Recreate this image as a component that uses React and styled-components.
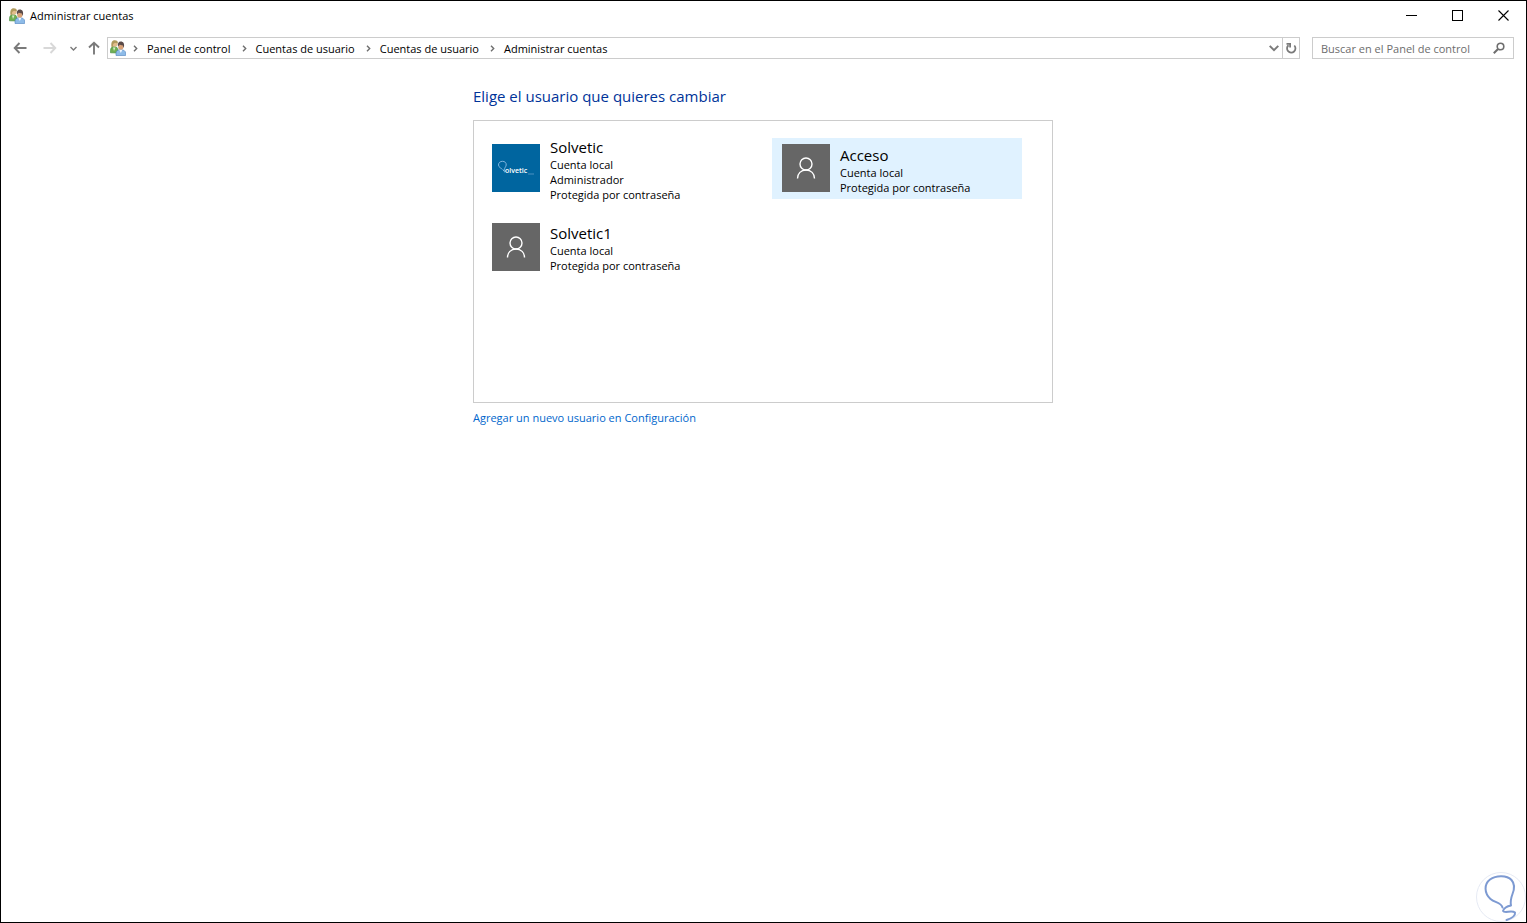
import React, { useState } from "react"
import styled, { createGlobalStyle, css } from "styled-components"

const GlobalStyle = createGlobalStyle`
  * {
    box-sizing: border-box;
  }

  body {
    background: #fff;
    color: #000;
    font: 11px/15px "Open Sans", "Noto Sans", sans-serif;
    margin: 0;
  }

  button,
  input {
    background: none;
    border: 0;
    color: inherit;
    font: inherit;
    padding: 0;
  }
`

const Window = styled.div`
  border: 1px solid #000;
  display: flex;
  flex-direction: column;
  min-height: 100vh;
  overflow: hidden;
  position: relative;
`

const TitleBar = styled.header`
  align-items: center;
  display: flex;
  height: 29px;
  padding-left: 8px;
`

const Title = styled.h1`
  flex: 1;
  font-size: 11px;
  font-weight: 400;
  margin: 0 0 0 5px;
`

const WindowButton = styled.button`
  align-items: center;
  display: flex;
  height: 29px;
  justify-content: center;
  width: 46px;

  &:hover {
    background: #e5e5e5;
  }
`

const NavBar = styled.nav`
  align-items: center;
  display: flex;
  height: 36px;
  padding: 0 12px 0 8px;
`

const NavButtons = styled.div`
  display: flex;
  gap: 8px;
  margin-right: 4px;
`

const NavButton = styled.button`
  align-items: center;
  color: ${({ $muted }) => ($muted ? "#d8d8d8" : "#7a7a7a")};
  display: flex;
  height: 22px;
  justify-content: center;
  width: ${({ $width = 22 }) => $width}px;
`

const AddressBar = styled.div`
  align-items: center;
  border: 1px solid #ccc;
  display: flex;
  flex: 1;
  height: 22px;
  margin-right: 12px;
  padding-left: 2px;
`

const Crumbs = styled.ol`
  display: flex;
  flex: 1;
  list-style: none;
  margin: 0;
  padding: 0;
`

const Crumb = styled.li`
  align-items: center;
  color: #6e6e6e;
  display: flex;

  a {
    color: #000;
    padding: 0 4px 0 2px;
    text-decoration: none;
  }

  svg {
    margin: 0 6px;
  }
`

const AddressButton = styled.button`
  align-items: center;
  border-left: ${({ $divided }) => ($divided ? "1px solid #ccc" : "0")};
  color: #7a7a7a;
  display: flex;
  height: 20px;
  justify-content: center;
  width: 17px;
`

const SearchBox = styled.form`
  align-items: center;
  border: 1px solid #ccc;
  color: #6e6e6e;
  display: flex;
  height: 22px;
  padding: 0 8px;
  width: 202px;

  input {
    flex: 1;
    min-width: 0;
    outline: 0;
  }

  input::placeholder {
    color: #6d6d6d;
    opacity: 1;
  }

  button {
    display: flex;
  }
`

const Content = styled.main`
  margin: 0 auto;
  max-width: 581px;
  padding: 20px 1px 0 0;
  width: 100%;
`

const Heading = styled.h2`
  color: #039;
  font-size: 15px;
  font-weight: 400;
  line-height: 20px;
  margin: 0 0 14px;
`

const Accounts = styled.ul`
  align-content: start;
  align-items: center;
  border: 1px solid #ccc;
  display: grid;
  gap: 10px 40px;
  grid-template-columns: repeat(2, 250px);
  list-style: none;
  margin: 0 0 7px;
  min-height: 283px;
  padding: 9px 8px;
`

const AccountLink = styled.a`
  align-items: center;
  color: #000;
  display: flex;
  gap: 10px;
  padding: 4px 10px;
  text-decoration: none;

  ${({ $active }) =>
    $active &&
    css`
      background: #e0f2ff;
    `}
`

const Avatar = styled.span`
  background: ${({ $brand }) => ($brand ? "#00659f" : "#666")};
  display: flex;
  flex: none;
  height: 48px;
  width: 48px;
`

const AccountText = styled.span`
  display: flex;
  flex-direction: column;
  padding-top: 3px;

  strong {
    font-size: 15px;
    font-weight: 400;
    line-height: 20px;
  }
`

const SettingsLink = styled.a`
  color: #06c;
  text-decoration: none;

  &:hover {
    text-decoration: underline;
  }
`

const Bulb = styled.svg`
  bottom: 0;
  position: absolute;
  right: 0;
`

const UsersIcon = () => (
  <svg width="16" height="16" viewBox="0 0 16 16" aria-hidden="true">
    <path d="M.5 12.800V10.500C.5 8 2 6.500 4 6.500s4 1 4 3.500v3z" fill="#6fae52" stroke="#3f8a3c" strokeWidth=".6" />
    <path d="M3 7.500l1 3.500 1.500-3.500z" fill="#d9efc9" />
    <circle cx="4.800" cy="4" r="2.700" fill="#e3bd8c" />
    <path d="M1.500 7C.8 3 2 .3 4.700.3c2.300 0 3.300 1.200 3.200 3.200L5 2.800 3.200 4l-.3 3z" fill="#b09a5c" />
    <path d="M6 15.500v-2.500c0-2 1.700-3.300 4.700-3.300s4.900 1.300 4.900 3.300v2.500z" fill="#8dbbe8" stroke="#4b82bd" strokeWidth=".6" />
    <path d="M9.300 10l1.500 3 1.500-3z" fill="#f1f7fd" />
    <circle cx="10.800" cy="7" r="2.600" fill="#d9a277" />
    <path d="M8 6.500C7.300 3.500 8.500 1.500 10.800 1.500S15 3.500 13.700 8l-.9-2.500-3-.7z" fill="#5b4a48" />
  </svg>
)

const Chevron = ({ down, size = 7 }) => (
  <svg width={size} height={size} viewBox="0 0 7 7" fill="none" stroke="currentColor" strokeWidth="1.400" aria-hidden="true">
    <path d={down ? "M.5 2l3 3 3-3" : "M2 .8l2.700 2.700L2 6.200"} />
  </svg>
)

const Arrow = ({ angle = 0 }) => (
  <svg width="14" height="14" viewBox="0 0 14 14" fill="none" stroke="currentColor" strokeWidth="1.900" aria-hidden="true">
    <path d="M13.500 7H2M6.500 2L1.700 7l4.800 5" transform={`rotate(${angle} 7 7)`} />
  </svg>
)

const PersonIcon = () => (
  <svg width="48" height="48" viewBox="0 0 48 48" fill="none" stroke="#fff" strokeWidth="1.400" aria-hidden="true">
    <circle cx="24" cy="20" r="6" />
    <path d="M15.500 34.500c0-5 3.500-8.500 8.500-8.500s8.500 3.500 8.500 8.500" />
  </svg>
)

const SolveticLogo = () => (
  <svg width="48" height="48" viewBox="0 0 48 48" fill="none" aria-hidden="true">
    <path
      d="M10.500 25.500c-1-1.300-4-2-4-4.500 0-2.300 1.700-3.700 4-3.700s3.900 1.500 3.700 3.700c-.2 2-1.700 2.500-1.700 4.500l-1.500 1 2.500.5-1.500 1.200"
      stroke="#8fbde4"
      strokeWidth=".9"
    />
    <text x="13" y="29" fill="#fff" fontSize="7" fontWeight="600" fontFamily="Open Sans, sans-serif">
      olvetic
    </text>
    <path d="M36 30h6" stroke="#5d9cca" strokeWidth=".8" />
  </svg>
)

const crumbs = ["Panel de control", "Cuentas de usuario", "Cuentas de usuario", "Administrar cuentas"]

const accounts = [
  { name: "Solvetic", details: ["Cuenta local", "Administrador", "Protegida por contraseña"], brand: true },
  { name: "Acceso", details: ["Cuenta local", "Protegida por contraseña"] },
  { name: "Solvetic1", details: ["Cuenta local", "Protegida por contraseña"] },
]

const App = () => {
  const [active, setActive] = useState("Acceso")

  return (
    <>
      <GlobalStyle />
      <Window>
        <TitleBar>
          <UsersIcon />
          <Title>Administrar cuentas</Title>
          <WindowButton aria-label="Minimizar">
            <svg width="11" height="11" stroke="#000" shapeRendering="crispEdges">
              <path d="M0 5.500h11" />
            </svg>
          </WindowButton>
          <WindowButton aria-label="Maximizar">
            <svg width="11" height="11" fill="none" stroke="#000" shapeRendering="crispEdges">
              <path d="M.5.5h10v10H.5z" />
            </svg>
          </WindowButton>
          <WindowButton aria-label="Cerrar">
            <svg width="11" height="11" stroke="#000" strokeWidth="1.100">
              <path d="M.5.5l10 10M10.500.5l-10 10" />
            </svg>
          </WindowButton>
        </TitleBar>

        <NavBar>
          <NavButtons>
            <NavButton aria-label="Atrás">
              <Arrow />
            </NavButton>
            <NavButton aria-label="Adelante" $muted>
              <Arrow angle={180} />
            </NavButton>
            <NavButton aria-label="Ubicaciones recientes" $width={8}>
              <Chevron down />
            </NavButton>
            <NavButton aria-label="Subir" $width={18}>
              <Arrow angle={90} />
            </NavButton>
          </NavButtons>
          <AddressBar>
            <UsersIcon />
            <Crumbs>
              {crumbs.map((crumb, i) => (
                <Crumb key={i}>
                  <Chevron />
                  <a href="#">{crumb}</a>
                </Crumb>
              ))}
            </Crumbs>
            <AddressButton aria-label="Ubicaciones anteriores">
              <Chevron down size={10} />
            </AddressButton>
            <AddressButton aria-label="Actualizar" $divided>
              <svg width="12" height="12" viewBox="0 0 12 12" fill="none" stroke="currentColor" strokeWidth="1.800">
                <path d="M3.500 3.200a4.200 4.200 0 1 0 5.800.3" />
                <path d="M1.500 1.800h3.600v3.600" />
              </svg>
            </AddressButton>
          </AddressBar>
          <SearchBox role="search" onSubmit={e => e.preventDefault()}>
            <input type="text" aria-label="Buscar" placeholder="Buscar en el Panel de control" />
            <button aria-label="Buscar">
              <svg width="12" height="12" viewBox="0 0 12 12" fill="none" stroke="currentColor" strokeWidth="1.600">
                <circle cx="7.500" cy="4.500" r="3.300" />
                <path d="M5 7L.8 11.200" strokeWidth="2" />
              </svg>
            </button>
          </SearchBox>
        </NavBar>

        <Content>
          <Heading>Elige el usuario que quieres cambiar</Heading>
          <Accounts>
            {accounts.map(({ name, details, brand }) => (
              <li key={name}>
                <AccountLink href="#" $active={active === name} onMouseEnter={() => setActive(name)}>
                  <Avatar $brand={brand}>{brand ? <SolveticLogo /> : <PersonIcon />}</Avatar>
                  <AccountText>
                    <strong>{name}</strong>
                    {details.map(detail => (
                      <span key={detail}>{detail}</span>
                    ))}
                  </AccountText>
                </AccountLink>
              </li>
            ))}
          </Accounts>
          <SettingsLink href="#">Agregar un nuevo usuario en Configuración</SettingsLink>
        </Content>

        <Bulb width="50" height="50" viewBox="0 0 50 50" fill="none" aria-hidden="true">
          <circle cx="25" cy="25" r="24.500" stroke="#e6eaf4" />
          <path
            d="M26.500 35.500C25 30 19 31 14.500 27 8 21 8 12 14 7.500 20 3 31 3 35.500 8c4 4.500 3 9 1 14-1.500 4-2.500 7-1.500 11.500-3 .5-7 2.500-8 5.500 1 2.500 9-1 12 1.500.5 3-4 6-8.500 7.500"
            stroke="#7d9ad2"
            strokeWidth="2"
            strokeLinecap="round"
            strokeLinejoin="round"
          />
        </Bulb>
      </Window>
    </>
  )
}

export default App
